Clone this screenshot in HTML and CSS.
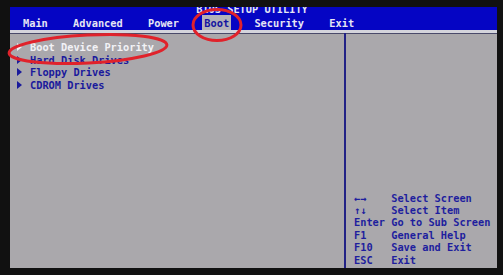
FILE: index.html
```html
<!DOCTYPE html>
<html lang="en">
<head>
<meta charset="UTF-8">
<title>BIOS Setup Utility</title>
<link rel="stylesheet" href="styles.css">
</head>
<body>
  <div class="screen">
    <div class="topbar">
      <div class="title">BIOS SETUP UTILITY</div>
      <div class="menu">
        <span>Main</span>
        <span>Advanced</span>
        <span>Power</span>
        <span class="active">Boot</span>
        <span>Security</span>
        <span>Exit</span>
      </div>
    </div>
    <div class="panes">
      <div class="left">
        <div class="item selected"><span class="tri"></span>Boot Device Priority</div>
        <div class="item"><span class="tri"></span>Hard Disk Drives</div>
        <div class="item"><span class="tri"></span>Floppy Drives</div>
        <div class="item"><span class="tri"></span>CDROM Drives</div>
      </div>
      <div class="right">
        <div class="help"><span class="key">&larr;&rarr;</span>Select Screen</div>
        <div class="help"><span class="key">&uarr;&darr;</span>Select Item</div>
        <div class="help"><span class="key">Enter</span>Go to Sub Screen</div>
        <div class="help"><span class="key">F1</span>General Help</div>
        <div class="help"><span class="key">F10</span>Save and Exit</div>
        <div class="help"><span class="key">ESC</span>Exit</div>
      </div>
    </div>
  </div>

  <!-- red marker circles drawn over the screenshot -->
  <svg class="marks" width="503" height="275" viewBox="0 0 503 275">
    <ellipse cx="217" cy="25" rx="24" ry="15.5" fill="none" stroke="#e0222b" stroke-width="3"/>
    <ellipse cx="88" cy="49" rx="79" ry="14" transform="rotate(-3 88 49)" fill="none" stroke="#e0222b" stroke-width="3"/>
  </svg>
</body>
</html>
```

FILE: styles.css
```css
body {
  margin: 0;
  width: 503px;
  height: 275px;
  background: #111;
  font-family: "DejaVu Sans Mono", monospace;
  font-size: 10.3px;
  font-weight: bold;
  overflow: hidden;
  position: relative;
}
.screen {
  margin: 7px 0 0 10px;
  width: 487px;
  height: 261px;
  display: flex;
  flex-direction: column;
  background: #aaa8ac;
}
.topbar {
  height: 23px;
  background: #0505c4;
  overflow: hidden;
  color: #e6e6f4;
}
.title {
  text-align: center;
  line-height: 12px;
  margin-top: -4px;
  margin-left: -3px;
}
.menu {
  display: flex;
  gap: 25.3px;
  padding-left: 13px;
  margin-top: 2px;
  line-height: 12px;
}
.menu .active {
  background: #b4b2b8;
  color: #1414a0;
  box-shadow: 0 0 0 2px #b4b2b8;
}
.panes {
  flex: 1;
  display: flex;
  border-top: 3px solid #d4d4dc;
  box-shadow: inset 0 1px 0 #4a4a6a;
}
.left {
  width: 334px;
  padding-top: 8px;
  border-right: 2px solid #222286;
}
.item {
  line-height: 12.6px;
  padding-left: 7px;
  color: #1a1a9c;
}
.item.selected {
  color: #f2f2f6;
}
.tri {
  display: inline-block;
  width: 0;
  height: 0;
  border-top: 4px solid transparent;
  border-bottom: 4px solid transparent;
  border-left: 5px solid currentColor;
  margin-right: 8px;
}
.right {
  flex: 1;
  display: flex;
  flex-direction: column;
  justify-content: flex-end;
  padding: 0 0 2px 8px;
  color: #1e1e9e;
}
.help {
  line-height: 12.4px;
  white-space: pre;
}
.key {
  display: inline-block;
  width: 37.2px;
}
.marks {
  position: absolute;
  left: 0;
  top: 0;
}
```
